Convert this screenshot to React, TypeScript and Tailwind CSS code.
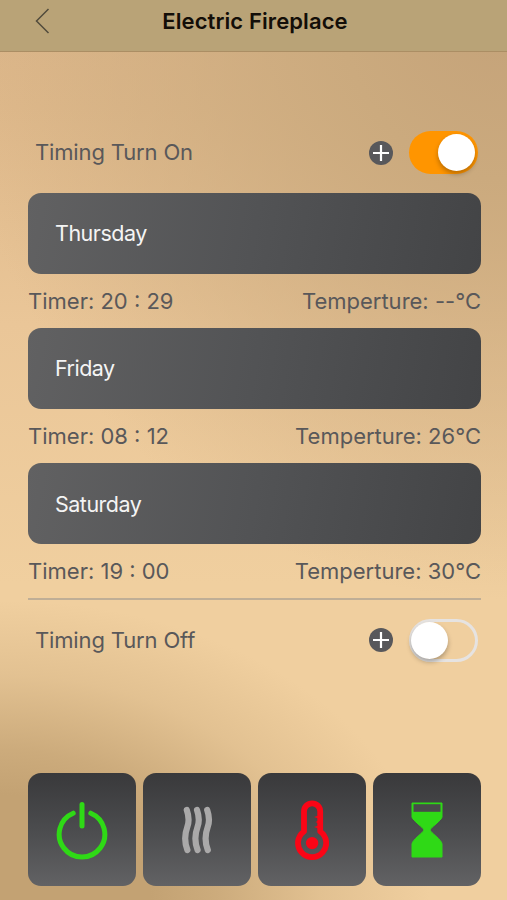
import React, { useState } from 'react';

type Schedule = {
  day: string;
  time: string;
  temperature: string;
};

const schedules: Schedule[] = [
  { day: 'Thursday', time: '20 : 29', temperature: '--°C' },
  { day: 'Friday', time: '08 : 12', temperature: '26°C' },
  { day: 'Saturday', time: '19 : 00', temperature: '30°C' },
];

const PowerIcon = () => (
  <svg width="52" height="60" viewBox="0 0 52 60" fill="none" stroke="#2fd916" strokeWidth="5" strokeLinecap="round">
    <path d="M17.2 13.2a22.8 22.8 0 1 0 17.6 0" />
    <path d="M26 4.5v21.5" />
  </svg>
);

const HeatIcon = () => (
  <svg width="32" height="48" viewBox="0 0 32 48" fill="none" stroke="#aaa9a9" strokeWidth="6.2" strokeLinecap="round">
    <path d="M5.8 4C7.9 10 8.5 15 6.3 21S2.5 34 6.4 44" />
    <path d="M16 4C18.1 10 18.7 15 16.5 21S12.7 34 16.6 44" />
    <path d="M26.2 4C28.3 10 28.9 15 26.7 21S22.9 34 26.8 44" />
  </svg>
);

const ThermometerIcon = () => (
  <svg width="34" height="60" viewBox="0 0 34 60" fill="none">
    <path
      d="M9 31.5V11.4a8.1 8.1 0 0 1 16.2 0V31.5a14.1 14.1 0 1 1-16.2 0Z"
      stroke="#fb0516"
      strokeWidth="5.8"
      strokeLinejoin="round"
    />
    <circle cx="17.1" cy="43.1" r="6.2" fill="#fb0516" />
    <path d="M24 15.6l-5 1.4 5 1.4zM24 20.6l-3.5 1.4 3.5 1.4zM24 25.6l-5 1.4 5 1.4z" fill="#fb0516" />
  </svg>
);

const HourglassIcon = () => (
  <svg width="32" height="56" viewBox="0 0 32 56" fill="none">
    <path
      d="M1 1h30v14c0 3-12 11-12 13s12 10 12 14v13H1V42c0-4 12-12 12-14S1 18 1 15Z"
      fill="#2fd916"
      stroke="#2fd916"
    />
    <path d="M2.5 2.2h27v7.6h-27z" fill="#494a4b" />
  </svg>
);

const modes = [
  { name: 'power', icon: <PowerIcon /> },
  { name: 'heat', icon: <HeatIcon /> },
  { name: 'temperature', icon: <ThermometerIcon /> },
  { name: 'timer', icon: <HourglassIcon /> },
];

const Toggle = ({ on, onChange }: { on: boolean; onChange: () => void }) => (
  <button
    role="switch"
    aria-checked={on}
    onClick={onChange}
    className={
      on
        ? 'flex h-[43px] w-[69px] items-center justify-end rounded-full bg-[#ff9500] pr-[3px]'
        : 'flex h-[43px] w-[69px] items-center rounded-full border-[3px] border-[#e6e3e1]'
    }
  >
    <span
      className={
        on
          ? 'size-[37px] rounded-full bg-white shadow-[0_3px_5px_rgba(0,0,0,0.28)]'
          : '-ml-px size-[37px] rounded-full bg-white shadow-[0_3px_5px_rgba(0,0,0,0.28)]'
      }
    />
  </button>
);

const TimingRow = ({ label, initial }: { label: string; initial: boolean }) => {
  const [on, setOn] = useState(initial);

  return (
    <div className="flex h-[81px] items-center pl-[7px] pr-[3.5px]">
      <span className="flex-1 text-[22px] tracking-[-0.15px]">{label}</span>
      <button className="mr-4 flex size-6 items-center justify-center rounded-full bg-[#58585b]">
        <svg width="16" height="16" viewBox="0 0 16 16" stroke="#fff" strokeWidth="2.2">
          <path d="M8 0v16M0 8h16" />
        </svg>
      </button>
      <Toggle on={on} onChange={() => setOn(!on)} />
    </div>
  );
};

const ScheduleItem = ({ day, time, temperature }: Schedule) => (
  <div>
    <div className="flex h-[80.7px] items-center rounded-[13px] bg-linear-[100deg] from-[#616162] via-[#525355] to-[#434446] pl-[27px]">
      <span className="text-[21.5px] tracking-[-0.5px] text-[#f4f4f4]">{day}</span>
    </div>
    <div className="flex h-[54.5px] items-center justify-between pt-px text-[22px]">
      <span>Timer: {time}</span>
      <span>Temperture: {temperature}</span>
    </div>
  </div>
);

const App = () => {
  return (
    <div className="flex h-screen flex-col overflow-hidden bg-[#f0cf9f] bg-[radial-gradient(ellipse_430px_300px_at_0%_100%,#c3a273_0%,#c3a273_35%,rgba(195,162,115,0.8)_50%,rgba(195,162,115,0.3)_75%,rgba(195,162,115,0)_100%),radial-gradient(ellipse_560px_600px_at_100%_0%,#c4a279_0%,#cbaa7e_30%,rgba(203,170,126,0.55)_60%,rgba(203,170,126,0)_100%),linear-gradient(180deg,#dcb68a_0%,#dfb98b_12%,#eac698_36%,#f0cf9f_65%,#f0cf9f_100%)] font-['Inter','Liberation_Sans',sans-serif] text-[#59585a]">
      <header className="grid h-[52px] shrink-0 grid-cols-[1fr_auto_1fr] border-b border-[#ab8e64] bg-[#b9a377] pb-[9px]">
        <button className="flex items-center pl-[35px]">
          <svg width="15" height="26" viewBox="0 0 15 26" fill="none" stroke="#514b3c" strokeWidth="1.5">
            <path d="M13.5 1L1.5 13l12 12" />
          </svg>
        </button>
        <h1 className="flex items-center pl-[3px] text-[22px] font-semibold tracking-[0.1px] text-[#130e08]">
          Electric Fireplace
        </h1>
      </header>

      <main className="flex flex-1 flex-col px-7 pt-[60px] pr-[26px]">
        <TimingRow label="Timing Turn On" initial={true} />

        <div>
          {schedules.map(schedule => (
            <ScheduleItem key={schedule.day} {...schedule} />
          ))}
        </div>
        <div className="-mt-px h-0.5 shrink-0 bg-[#bfae96]" />

        <TimingRow label="Timing Turn Off" initial={false} />

        <nav className="mt-auto mb-[14px] grid grid-cols-4 gap-[7px]">
          {modes.map(mode => (
            <button
              key={mode.name}
              aria-label={mode.name}
              className="flex h-[113px] items-center justify-center rounded-[13px] bg-linear-to-b from-[#39393b] via-[#4b4c4e] to-[#626264]"
            >
              {mode.icon}
            </button>
          ))}
        </nav>
      </main>
    </div>
  );
};

export default App;
